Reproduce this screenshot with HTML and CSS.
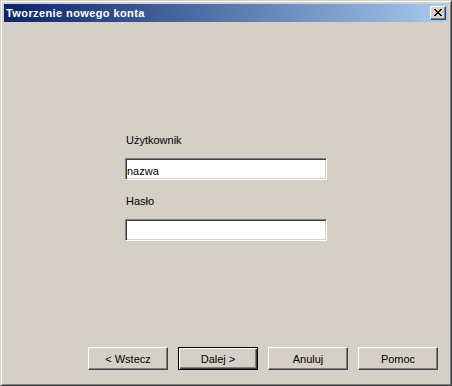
FILE: index.html
```html
<!DOCTYPE html>
<html lang="pl">
<head>
  <meta charset="UTF-8" />
  <title>Tworzenie nowego konta</title>
  <link rel="stylesheet" href="styles.css">
</head>

<body>
  <div class="window">
    <div class="titlebar">
      <span class="title">Tworzenie nowego konta</span>
      <button class="close-btn" aria-label="Zamknij">
        <svg width="8" height="7" viewBox="0 0 8 7" shape-rendering="crispEdges">
          <path fill="#000" d="M0 0h2v1H0zM6 0h2v1H6zM1 1h2v1H1zM5 1h2v1H5zM2 2h4v1H2zM3 3h2v1H3zM2 4h4v1H2zM1 5h2v1H1zM5 5h2v1H5zM0 6h2v1H0zM6 6h2v1H6z"/>
        </svg>
      </button>
    </div>

    <div class="client">
      <form class="account-form">
        <label for="user">Użytkownik</label>
        <input id="user" type="text" value="nazwa">

        <label for="pass" class="second">Hasło</label>
        <input id="pass" type="password">
      </form>

      <div class="buttons">
        <button class="push">&lt; Wstecz</button>
        <button class="push default">Dalej &gt;</button>
        <button class="push">Anuluj</button>
        <button class="push">Pomoc</button>
      </div>
    </div>
  </div>
</body>
</html>
```

FILE: styles.css
```css
* {
  margin: 0;
  padding: 0;
  box-sizing: border-box;
  font-family: 'Liberation Sans', Arial, sans-serif;
}

body {
  background: #d4d0c8;
  color: #000;
  font-size: 11px;
}

.window {
  width: 452px;
  height: 386px;
  display: flex;
  flex-direction: column;
  background: #d4d0c8;
  border: 1px solid;
  border-color: #d4d0c8 #404040 #404040 #d4d0c8;
  box-shadow: inset 1px 1px #ffffff, inset -1px -1px #808080;
  padding: 3px;
}

/* title bar */
.titlebar {
  height: 18px;
  display: flex;
  align-items: center;
  justify-content: space-between;
  padding: 0 2px;
  background: linear-gradient(to right, #0a246a, #a6caf0);
}

.title {
  color: #fff;
  font-weight: bold;
  font-size: 11px;
  letter-spacing: 0.4px;
  line-height: 13px;
  padding-top: 1px;
}

.close-btn {
  width: 16px;
  height: 14px;
  display: flex;
  align-items: center;
  justify-content: center;
  background: #d4d0c8;
  border: 1px solid;
  border-color: #ffffff #404040 #404040 #ffffff;
  box-shadow: inset -1px -1px #808080;
  padding: 0 0 1px 0;
}

.close-btn svg {
  display: block;
}

/* client area */
.client {
  flex: 1;
  display: flex;
  flex-direction: column;
}

.account-form {
  display: flex;
  flex-direction: column;
  width: 202px;
  margin: 112px 0 0 121px;
}

label {
  line-height: 13px;
  padding-left: 1px;
  margin-bottom: 11px;
}

label.second {
  margin-top: 15px;
}

input {
  height: 22px;
  width: 202px;
  background: #fff;
  border: 1px solid;
  border-color: #808080 #ffffff #ffffff #808080;
  box-shadow: inset 1px 1px #404040, inset -1px -1px #d4d0c8;
  padding: 3px 0 0 1px;
  font-size: 11px;
  color: #000;
  outline: none;
}

.buttons {
  margin-top: auto;
  margin-bottom: 12px;
  padding-right: 10px;
  display: flex;
  justify-content: flex-end;
  gap: 10px;
}

.push {
  width: 80px;
  height: 23px;
  background: #d4d0c8;
  border: 1px solid;
  border-color: #ffffff #404040 #404040 #ffffff;
  box-shadow: inset -1px -1px #808080;
  font-size: 11px;
  line-height: 13px;
  color: #000;
  padding-top: 1px;
}

.push.default {
  border-color: #000;
  box-shadow: inset 1px 1px #ffffff, inset -1px -1px #404040, inset -2px -2px #808080;
}
```
